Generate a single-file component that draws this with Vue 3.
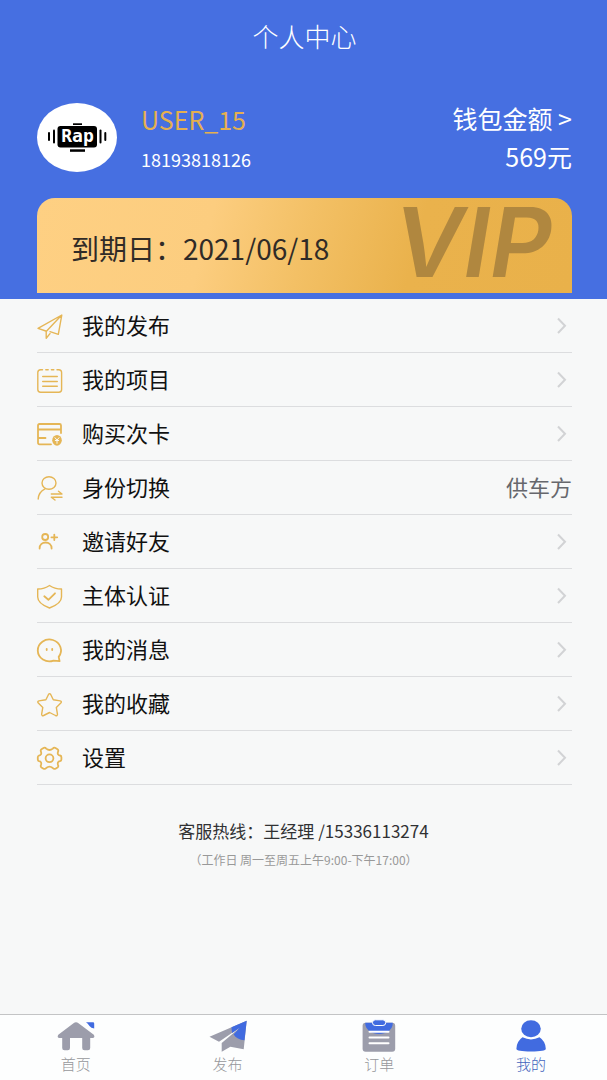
<script setup>
const menu = [
  { id: 'publish', label: '我的发布' },
  { id: 'project', label: '我的项目' },
  { id: 'card', label: '购买次卡' },
  { id: 'switch', label: '身份切换', value: '供车方' },
  { id: 'invite', label: '邀请好友' },
  { id: 'verify', label: '主体认证' },
  { id: 'message', label: '我的消息' },
  { id: 'favorite', label: '我的收藏' },
  { id: 'settings', label: '设置' },
]
const tabs = [
  { id: 'home', label: '首页' },
  { id: 'post', label: '发布' },
  { id: 'order', label: '订单' },
  { id: 'mine', label: '我的', active: true },
]
</script>

<template>
  <div class="page">
    <header class="hero">
      <h1 class="title">个人中心</h1>
      <div class="profile">
        <svg class="avatar" viewBox="0 0 80 69" role="img" aria-label="Rap">
          <ellipse cx="40" cy="34.5" rx="40" ry="34.5" fill="#fff" />
          <g fill="#000">
            <rect x="20.5" y="23" width="39.5" height="21.5" rx="3" />
            <rect x="11" y="29" width="2" height="9" rx="1" />
            <rect x="16" y="26.5" width="2" height="14" rx="1" />
            <rect x="62.5" y="26.5" width="2" height="14" rx="1" />
            <rect x="67.3" y="29" width="2" height="9" rx="1" />
            <rect x="36" y="20.3" width="9" height="1.7" />
            <rect x="33" y="46.3" width="15" height="2.5" />
          </g>
          <text class="avatar-text" x="40.5" y="39" text-anchor="middle">Rap</text>
        </svg>
        <div class="identity">
          <div class="name">USER_15</div>
          <div class="phone">18193818126</div>
        </div>
        <a class="wallet" href="#wallet">
          <span>钱包金额 &gt;</span>
          <span>569元</span>
        </a>
      </div>
      <section class="vip">
        <p class="expiry">到期日：2021/06/18</p>
        <strong class="vip-mark">VIP</strong>
      </section>
    </header>

    <main>
      <ul class="menu">
        <li v-for="item in menu" :key="item.id">
          <a class="row" :href="'#' + item.id">
            <svg class="icon" viewBox="0 0 26 27" aria-hidden="true">
              <g v-if="item.id === 'publish'">
                <path d="M8.8 19 1 16.3 24.8 3 21.3 22.3 13 19.6M24.5 3.3 9.2 19.6V26.3L13 21.6" />
              </g>
              <g v-else-if="item.id === 'project'">
                <path d="M5.5 3.8H3.6Q.8 3.8.8 6.6V23.6Q.8 26.3 3.6 26.3H21.8Q24.6 26.3 24.6 23.6V6.6Q24.6 3.8 21.8 3.8H20M8.8 3.8H11.2M14.4 3.8H16.8M5.7 10.5H20.3M5.7 15.5H20.3M5.7 20.3H20.3" />
              </g>
              <g v-else-if="item.id === 'card'" class="heavy">
                <path d="M14 24.3H2.5Q1 24.3 1 22.8V5.5Q1 4 2.5 4H22.5Q24 4 24 5.5V13M1 9.5H24M1 18H8.5" />
                <ellipse cx="20" cy="20.3" rx="4.8" ry="5.4" fill="#e5b656" stroke="none" />
                <path class="knockout" d="M18 17.7 20 20.2 22 17.7M20 20.2V23.3M18.3 20.5H21.7" />
              </g>
              <g v-else-if="item.id === 'switch'">
                <ellipse cx="12" cy="9" rx="7" ry="6.3" />
                <path d="M8 14.8Q1.5 18 1.2 25M14.3 20H25L21.5 17.3M25 23.2H14.3L18 26" />
              </g>
              <g v-else-if="item.id === 'invite'" class="heavy">
                <circle cx="8.2" cy="9" r="3" />
                <path d="M2.6 20.5C2.6 12.5 14.6 12.5 14.6 20.5M17.3 6.6V12M14.4 9.3H20.2" />
              </g>
              <g v-else-if="item.id === 'verify'">
                <path d="M12.5 3.5Q17.5 7 24.5 7V15Q24.5 21.5 12.5 26Q.7 21.5.7 15V7Q7.5 7 12.5 3.5Z" />
                <path class="bold" d="M7.3 14.3 11.4 17.8 18 11.3" />
              </g>
              <g v-else-if="item.id === 'message'" class="heavy">
                <path d="M16.5 24.6A11.6 10.9 0 1 1 21.7 20.9L22.6 25.2Z" />
                <path d="M9.7 12.8V14M15.2 12.8V14" />
              </g>
              <g v-else-if="item.id === 'favorite'">
                <path d="M11.5 4.5Q12.6 2.8 13.7 4.5L16.3 9.8 23.2 10.9Q25.2 11.5 23.8 13.1L19.3 17.4 20.5 24.3Q20.4 26.2 18.5 25.5L12.6 22.5 6.6 25.5Q4.8 26.2 4.6 24.3L5.8 17.4 1.3 13.1Q0 11.5 1.9 10.9L8.9 9.8Z" />
              </g>
              <g v-else class="heavy">
                <path d="M9.2 4.6Q12.5 7.4 15.8 4.6Q17 3 18.9 4.2L20.5 5.2Q21.8 6.1 21 7.8Q20 11 23 11.5Q24.4 11.8 24.4 13.2V15.4Q24.4 16.8 23 17.1Q20 17.7 21 20.8Q21.8 22.5 20.5 23.4L18.9 24.4Q17 25.6 15.8 24Q12.5 21.2 9.2 24Q8 25.6 6.1 24.4L4.5 23.4Q3.2 22.5 4 20.8Q5 17.7 2 17.1Q.8 16.8.8 15.4V13.2Q.8 11.8 2 11.5Q5 11 4 7.8Q3.2 6.1 4.5 5.2L6.1 4.2Q8 3 9.2 4.6Z" />
                <circle cx="12.5" cy="14.3" r="3.9" />
              </g>
            </svg>
            <span class="label">{{ item.label }}</span>
            <span v-if="item.value" class="value">{{ item.value }}</span>
            <svg v-else class="chevron" viewBox="0 0 16 17" aria-hidden="true">
              <path d="M2 1.5 9 8.7 2 16" />
            </svg>
          </a>
        </li>
      </ul>
      <footer class="service">
        <p class="hotline">客服热线：王经理 /15336113274</p>
        <p class="hours">（工作日 周一至周五上午9:00-下午17:00）</p>
      </footer>
    </main>

    <nav class="tabs">
      <a
        v-for="tab in tabs"
        :key="tab.id"
        class="tab"
        :class="{ active: tab.active }"
        :href="'#' + tab.id"
      >
        <svg class="tab-icon" viewBox="0 0 40 34" aria-hidden="true">
          <g v-if="tab.id === 'home'">
            <path fill="#9c9dab" d="M17.5 4.2Q20 2.5 22.5 4.2L37.8 15.8Q39.5 18.8 36.5 19H34.2V29Q34.2 31.3 31.8 31.3H28.5Q26.2 31.3 26.2 29V19H14V29Q14 31.3 11.7 31.3H8.5Q6.2 31.3 6.2 29V19H3.5Q.6 18.8 2.3 15.8Z" />
            <path fill="#416be0" d="M30 3.3H37Q38.2 3.3 38.2 4.5V9.6Q35 9.3 33.5 7Q31.8 4.6 30 3.3Z" />
          </g>
          <g v-else-if="tab.id === 'post'">
            <path fill="#9c9dab" d="M38.7 1.7 1.5 17.7 11 22.7 31.7 8.7 13.7 24V32.7L22.4 27.8 35.7 30.3Z" />
            <path fill="#416be0" d="M38.7 1.7 23.5 8.3Q23.5 11.5 24.2 13.9L31.7 8.7 25.6 15.5Q29 20.8 36.5 21.3Z" />
          </g>
          <g v-else-if="tab.id === 'order'">
            <rect x="3.6" y="3.8" width="32.6" height="29" rx="3" fill="#9c9dab" />
            <path fill="#416be0" d="M6.2 3.8H33.8C33.8 18.8 6.2 18.8 6.2 3.8Z" />
            <rect x="13.5" y=".8" width="13.2" height="5.7" rx="2.8" fill="#416be0" stroke="#fff" />
            <path d="M10.5 12.7H29.5M10.5 18.5H29.5M10.5 24.3H29.5" stroke="#fff" stroke-width="2" stroke-linecap="round" />
          </g>
          <g v-else fill="#416be0">
            <ellipse cx="20" cy="9.7" rx="9.8" ry="8.5" />
            <path d="M11.5 18.3Q20 22.5 28.5 18.3Q34.6 22.3 34.8 29.8Q34.8 32.5 20 32.5Q5.4 32.5 5.4 29.8Q5.6 22.3 11.5 18.3Z" />
          </g>
        </svg>
        <span>{{ tab.label }}</span>
      </a>
    </nav>
  </div>
</template>

<style>
body {
  margin: 0;
}
</style>

<style scoped>
.page {
  display: flex;
  flex-direction: column;
  min-height: 100vh;
  background: #f7f8f8;
  color: #111;
  font-family: "Noto Sans CJK SC", sans-serif;
}
a {
  color: inherit;
  text-decoration: none;
}
h1,
p,
ul {
  margin: 0;
  padding: 0;
}
.hero {
  padding: 18px 35px 6px 37px;
  background: #466fe1;
  color: #fff;
}
.title {
  font-size: 26px;
  font-weight: 300;
  line-height: 36px;
  text-align: center;
}
.profile {
  display: flex;
  align-items: flex-start;
  margin-top: 49px;
}
.avatar {
  width: 80px;
  height: 69px;
}
.avatar-text {
  fill: #fff;
  font: bold 18px "DejaVu Sans Mono", monospace;
}
.identity {
  flex: 1;
  margin-left: 24px;
}
.name {
  color: #e5b04f;
  font-size: 25px;
  line-height: 32px;
}
.phone {
  margin-top: 10px;
  font-size: 18px;
  line-height: 28px;
}
.wallet {
  display: flex;
  flex-direction: column;
  align-items: flex-end;
  margin-top: -4px;
  font-size: 25px;
  line-height: 38px;
}
.vip {
  display: flex;
  align-items: center;
  justify-content: space-between;
  height: 95px;
  margin-top: 23px;
  padding: 0 20px 0 34px;
  border-radius: 18px 18px 0 0;
  background: linear-gradient(105deg, #fed083 0%, #fccd7f 32%, #f3c065 50%, #eab24c 70%, #e9b14a 100%);
}
.expiry {
  padding-top: 4px;
  color: #302b27;
  font-size: 28px;
  line-height: 40px;
}
.vip-mark {
  align-self: flex-start;
  color: #b0873f;
  font-family: Inter, sans-serif;
  font-size: 96px;
  font-style: italic;
  font-weight: 600;
  line-height: 88px;
}
.menu {
  padding: 0 35px 0 37px;
  list-style: none;
}
.row {
  display: flex;
  align-items: center;
  height: 53px;
  border-bottom: 1px solid #dcdddf;
}
.icon {
  width: 26px;
  height: 27px;
  fill: none;
  stroke: #e5b656;
  stroke-width: 1.4;
  stroke-linecap: round;
  stroke-linejoin: round;
  overflow: visible;
}
.heavy,
.bold {
  stroke-width: 1.8;
}
.knockout {
  stroke: #f7f8f8;
  stroke-width: 1;
}
.label {
  flex: 1;
  margin-left: 19px;
  padding-bottom: 3px;
  font-size: 22px;
  line-height: 32px;
}
.value {
  padding-bottom: 3px;
  color: #66676c;
  font-size: 22px;
  line-height: 32px;
}
.chevron {
  width: 16px;
  height: 17px;
  fill: none;
  stroke: #d2d3d5;
  stroke-width: 2;
}
.service {
  padding: 33px 0 24px;
  text-align: center;
}
.hotline {
  color: #303133;
  font-size: 17px;
  line-height: 26px;
}
.hours {
  margin-top: 6px;
  color: #999;
  font-size: 12px;
  line-height: 20px;
}
.tabs {
  display: flex;
  margin-top: auto;
  border-top: 1px solid #c3c4c5;
  background: #fdfefe;
}
.tab {
  display: flex;
  flex: 1;
  flex-direction: column;
  align-items: center;
  gap: 1px;
  padding: 4px 0 6px;
  color: #96979b;
  font-size: 15px;
  font-weight: 300;
  line-height: 20px;
}
.tab.active {
  color: #4465bd;
}
.tab-icon {
  width: 40px;
  height: 34px;
}
</style>
